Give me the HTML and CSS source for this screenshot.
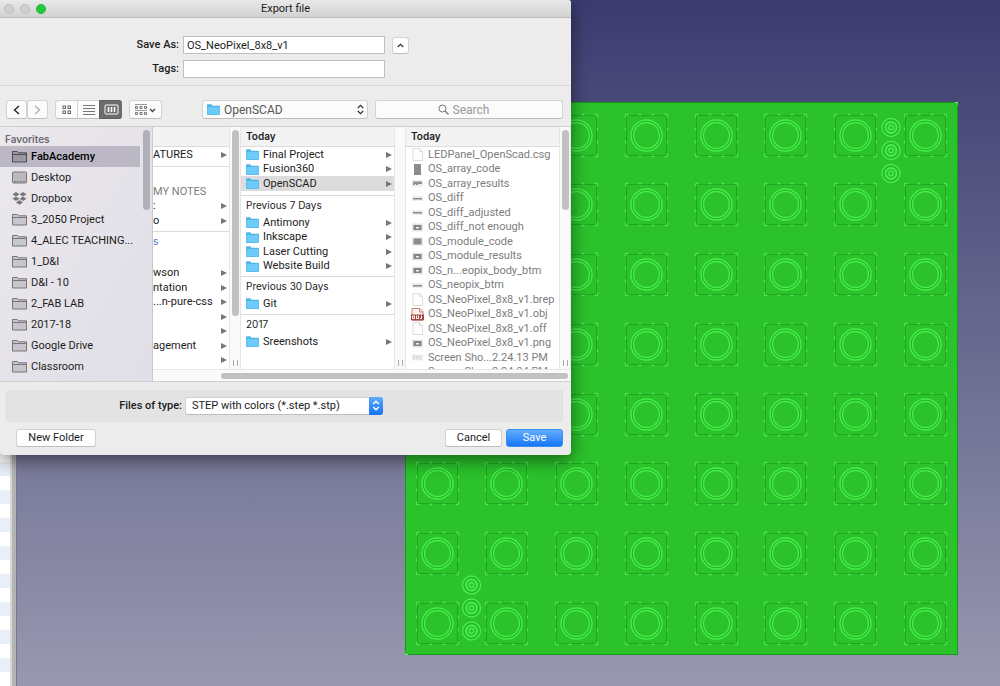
FILE: index.html
```html
<!DOCTYPE html>
<html lang="en">
<head>
    <meta charset="utf-8">
    <title>Export file</title>
    <link rel="stylesheet" href="styles.css">
</head>
<body>
    <!-- Shared icons -->
    <svg class="sprite" aria-hidden="true">
        <defs>
            <symbol id="folder" viewBox="0 0 13 13">
                <path d="M0 2.2q0-1 1-1h3.2l1.3 1.5H12q1 0 1 1V11q0 1-1 1H1q-1 0-1-1z" fill="#4fb4e6"/>
                <path d="M.5 4h12v7.4H.5z" fill="#6ccbf7"/>
            </symbol>
            <symbol id="place" viewBox="0 0 15 13">
                <path d="M.5 12V1.5h4.8l1.2 1.3h8V12z" fill="currentColor" fill-opacity=".28" stroke="currentColor"/>
                <path d="M.5 4.5h14" stroke="currentColor"/>
            </symbol>
            <symbol id="desktop" viewBox="0 0 15 13">
                <rect x=".5" y="1" width="14" height="11" rx="1" fill="currentColor" fill-opacity=".4" stroke="currentColor"/>
                <path d="M2 10.5h11" stroke="currentColor" stroke-dasharray="2 1"/>
            </symbol>
            <symbol id="dropbox" viewBox="0 0 15 13">
                <path d="M4 0l3.500 2.200L4 4.400.5 2.200zM11 0l3.500 2.200L11 4.400 7.500 2.200zM4 4.600l3.500 2.200L4 9 .5 6.800zM11 4.600l3.500 2.200L11 9 7.500 6.800zM7.500 8L11 10.400 7.500 12.800 4 10.400z" fill="currentColor"/>
            </symbol>
            <symbol id="arrow" viewBox="0 0 6 6">
                <path d="M0 0l6 3-6 3z" fill="#777"/>
            </symbol>
            <symbol id="page" viewBox="0 0 13 13">
                <path d="M2 .5h6.500l3 3v9H2z" fill="#fff" stroke="#ddd"/>
                <path d="M8.500.5v3h3" fill="none" stroke="#ddd"/>
            </symbol>
            <symbol id="code" viewBox="0 0 13 13">
                <path d="M3 1h7v11H3z" fill="#8c8c8c"/>
            </symbol>
            <symbol id="results" viewBox="0 0 13 13">
                <path d="M1 3h11v7H1z" fill="#eee"/>
                <path d="M2 4.500h9V7H7v1H5V7H4v1H2z" fill="#909090"/>
            </symbol>
            <symbol id="line" viewBox="0 0 13 13">
                <path d="M1 4h11v5H1z" fill="#eee"/>
                <path d="M2 6h9v1.500H2z" fill="#8a8a8a"/>
            </symbol>
            <symbol id="shot" viewBox="0 0 13 13">
                <path d="M1 2.500h11v8H1z" fill="#e6e6e6"/>
                <path d="M2.500 4h8v5h-8z" fill="#858585"/>
                <path d="M5 6h3v1.500H5z" fill="#eee"/>
            </symbol>
            <symbol id="module" viewBox="0 0 13 13">
                <path d="M1 2.500h11v8H1z" fill="#e6e6e6"/>
                <path d="M2.500 3.500h8v6h-8z" fill="#8c8c8c"/>
            </symbol>
            <symbol id="faint" viewBox="0 0 13 13">
                <path d="M1 3.500h11v6H1z" fill="#ececec"/>
                <path d="M2 5.500h9M2 7.500h9" stroke="#d3d3d3" stroke-dasharray="2 1"/>
            </symbol>
            <symbol id="obj" viewBox="0 0 13 13">
                <path d="M1 .5h8l3 3v9H1z" fill="#fff3f1" stroke="#c98079"/>
                <path d="M8.500.5V4H12" fill="none" stroke="#c98079"/>
                <path d="M0 6.500h13V12H0z" fill="#a8453e"/>
                <path d="M1.500 8h2v2.500h-2zM5.500 7.500v3h2v-3M9 10.500h1.500v-3" fill="none" stroke="#fff"/>
            </symbol>
        </defs>
    </svg>

    <!-- Application window behind the dialog -->
    <div class="viewer">
        <div class="tree-edge"></div>
        <svg class="board" viewBox="0 0 553 553" role="img" aria-label="8x8 LED panel model">
            <defs>
                <g id="led" fill="none">
                    <rect x="-19.500" y="-19.500" width="40" height="40" stroke="#20a722"/>
                    <path d="M-20.500-20.500h42M21.500-20.500v42M21.500 21.500h-42M-20.500 21.500v-42" stroke="#47e84a" stroke-width="1.300" stroke-dasharray="3 10"/>
                    <g transform="translate(.5 .5)">
                        <circle r="15.500" stroke="#45ee48" stroke-width="1.400"/>
                        <circle r="14.200" stroke="#20a722" stroke-width=".8"/>
                        <circle r="13" stroke="#45ee48" stroke-width="1.300"/>
                    </g>
                </g>
                <g id="row">
                    <use href="#led" x="32"/>
                    <use href="#led" x="101"/>
                    <use href="#led" x="171"/>
                    <use href="#led" x="241"/>
                    <use href="#led" x="311"/>
                    <use href="#led" x="380"/>
                    <use href="#led" x="450"/>
                    <use href="#led" x="520"/>
                </g>
                <g id="pin" fill="none" stroke="#4aed4d" stroke-width="1.400">
                    <circle r="9"/>
                    <circle r="7.600" stroke="#20a722" stroke-width=".6"/>
                    <circle r="5.500" stroke-width="1.800"/>
                    <circle r="2.300"/>
                </g>
                <g id="header">
                    <use href="#pin" y="0"/>
                    <use href="#pin" y="23"/>
                    <use href="#pin" y="46"/>
                </g>
            </defs>
            <rect x=".5" y=".5" width="552" height="552" fill="#2bc22c" stroke="#169a1c"/>
            <use href="#row" y="33"/>
            <use href="#row" y="102"/>
            <use href="#row" y="172"/>
            <use href="#row" y="242"/>
            <use href="#row" y="312"/>
            <use href="#row" y="381"/>
            <use href="#row" y="451"/>
            <use href="#row" y="521"/>
            <use href="#header" x="486" y="25.500"/>
            <use href="#header" x="66.500" y="483"/>
            <path d="M550 .5h3v3M0 550v2.500h3" fill="none" stroke="#6df070"/>
        </svg>
    </div>

    <!-- Export dialog -->
    <form class="dialog" onsubmit="return false">
        <header class="titlebar">
            <div class="lights"><i></i><i></i><i class="zoom"></i></div>
            <h1>Export file</h1>
        </header>

        <div class="name-form">
            <label for="save-as">Save As:</label>
            <input id="save-as" type="text" value="OS_NeoPixel_8x8_v1">
            <button type="button" class="collapse" aria-label="Collapse">
                <svg width="7" height="5"><path d="M.7 4l2.800-2.700L6.300 4" fill="none" stroke="#333" stroke-width="1.300"/></svg>
            </button>
            <label for="tags">Tags:</label>
            <input id="tags" type="text">
        </div>

        <div class="toolbar">
            <div class="nav">
                <button type="button" aria-label="Back"><svg width="7" height="10"><path d="M6 1L1.500 5 6 9" fill="none" stroke="#222" stroke-width="1.400"/></svg></button>
                <button type="button" aria-label="Forward"><svg width="7" height="10"><path d="M1 1l4.500 4L1 9" fill="none" stroke="#aaa" stroke-width="1.200"/></svg></button>
            </div>
            <div class="views">
                <button type="button" aria-label="Icons"><svg width="10" height="10" fill="none" stroke="#666"><rect x="1" y="1" width="2.500" height="2.500"/><rect x="6" y="1" width="2.500" height="2.500"/><rect x="1" y="6" width="2.500" height="2.500"/><rect x="6" y="6" width="2.500" height="2.500"/></svg></button>
                <button type="button" aria-label="List"><svg width="12" height="10"><path d="M0 .5h12M0 3.500h12M0 6.500h12M0 9.500h12" stroke="#777"/></svg></button>
                <button type="button" class="active" aria-label="Columns"><svg width="15" height="11" fill="none" stroke="#fff"><rect x="1" y="1" width="13" height="9" rx="1"/><path d="M4.500 3v5M7.500 3v5M10.500 3v5" stroke-width="1.600"/></svg></button>
            </div>
            <button type="button" class="arrange" aria-label="Arrange">
                <svg width="21" height="12" fill="none" stroke="#777"><path d="M0 .5h12M0 6.500h12" stroke="#999"/><path d="M.5 2.500h2v2h-2zM5 2.500h2v2H5zM9.500 2.500h2v2h-2zM.5 8.500h2v2h-2zM5 8.500h2v2H5zM9.500 8.500h2v2h-2z"/><path d="M15 5l2.500 2.500L20 5" stroke="#444" stroke-width="1.300"/></svg>
            </button>
            <div class="location">
                <svg class="icon"><use href="#folder"/></svg>
                <select aria-label="Location"><option>OpenSCAD</option></select>
                <svg class="updown" width="7" height="11"><path d="M.8 4l2.700-2.700L6.200 4M.8 7l2.700 2.700L6.200 7" fill="none" stroke="#333" stroke-width="1.200"/></svg>
            </div>
            <label class="search">
                <svg width="11" height="11" fill="none" stroke="#777"><circle cx="4.500" cy="4.500" r="3.500"/><path d="M7 7l3.500 3.500" stroke-width="1.300"/></svg>
                <input type="search" placeholder="Search" aria-label="Search">
            </label>
        </div>

        <div class="browser">
            <nav class="sidebar">
                <div class="places">
                    <h2>Favorites</h2>
                    <ul>
                        <li class="selected"><svg><use href="#place"/></svg>FabAcademy</li>
                        <li><svg><use href="#desktop"/></svg>Desktop</li>
                        <li><svg><use href="#dropbox"/></svg>Dropbox</li>
                        <li><svg><use href="#place"/></svg>3_2050 Project</li>
                        <li><svg><use href="#place"/></svg>4_ALEC TEACHING...</li>
                        <li><svg><use href="#place"/></svg>1_D&amp;I</li>
                        <li><svg><use href="#place"/></svg>D&amp;I - 10</li>
                        <li><svg><use href="#place"/></svg>2_FAB LAB</li>
                        <li><svg><use href="#place"/></svg>2017-18</li>
                        <li><svg><use href="#place"/></svg>Google Drive</li>
                        <li><svg><use href="#place"/></svg>Classroom</li>
                        <li><svg><use href="#place"/></svg></li>
                    </ul>
                </div>
                <div class="track"><div class="thumb short"></div></div>
            </nav>

            <div class="columns">
                <div class="panes">
                    <section class="pane peek">
                        <h3 class="top"></h3>
                        <ul>
                            <li><span>ATURES</span><svg class="more"><use href="#arrow"/></svg></li>
                        </ul>
                        <h3></h3>
                        <ul>
                            <li class="dim"><span>MY NOTES</span></li>
                            <li><span>:</span><svg class="more"><use href="#arrow"/></svg></li>
                            <li><span>o</span><svg class="more"><use href="#arrow"/></svg></li>
                        </ul>
                        <h3 class="tagged">s</h3>
                        <ul>
                            <li></li>
                            <li><span>wson</span><svg class="more"><use href="#arrow"/></svg></li>
                            <li><span>ntation</span><svg class="more"><use href="#arrow"/></svg></li>
                            <li><span>...n-pure-css</span><svg class="more"><use href="#arrow"/></svg></li>
                            <li><span></span><svg class="more"><use href="#arrow"/></svg></li>
                            <li><span></span><svg class="more"><use href="#arrow"/></svg></li>
                            <li><span>agement</span><svg class="more"><use href="#arrow"/></svg></li>
                            <li><span></span><svg class="more"><use href="#arrow"/></svg></li>
                        </ul>
                    </section>
                    <div class="track"><div class="thumb long"></div><div class="grip"></div></div>

                    <section class="pane">
                        <h3 class="top">Today</h3>
                        <ul>
                            <li><svg class="icon"><use href="#folder"/></svg><span>Final Project</span><svg class="more"><use href="#arrow"/></svg></li>
                            <li><svg class="icon"><use href="#folder"/></svg><span>Fusion360</span><svg class="more"><use href="#arrow"/></svg></li>
                            <li class="selected"><svg class="icon"><use href="#folder"/></svg><span>OpenSCAD</span><svg class="more"><use href="#arrow"/></svg></li>
                        </ul>
                        <h3>Previous 7 Days</h3>
                        <ul>
                            <li><svg class="icon"><use href="#folder"/></svg><span>Antimony</span><svg class="more"><use href="#arrow"/></svg></li>
                            <li><svg class="icon"><use href="#folder"/></svg><span>Inkscape</span><svg class="more"><use href="#arrow"/></svg></li>
                            <li><svg class="icon"><use href="#folder"/></svg><span>Laser Cutting</span><svg class="more"><use href="#arrow"/></svg></li>
                            <li><svg class="icon"><use href="#folder"/></svg><span>Website Build</span><svg class="more"><use href="#arrow"/></svg></li>
                        </ul>
                        <h3>Previous 30 Days</h3>
                        <ul>
                            <li><svg class="icon"><use href="#folder"/></svg><span>Git</span><svg class="more"><use href="#arrow"/></svg></li>
                        </ul>
                        <h3>2017</h3>
                        <ul>
                            <li><svg class="icon"><use href="#folder"/></svg><span>Sreenshots</span><svg class="more"><use href="#arrow"/></svg></li>
                        </ul>
                    </section>
                    <div class="track"><div class="grip"></div></div>

                    <section class="pane files">
                        <h3 class="top">Today</h3>
                        <ul>
                            <li><svg class="icon"><use href="#page"/></svg><span>LEDPanel_OpenScad.csg</span></li>
                            <li><svg class="icon"><use href="#code"/></svg><span>OS_array_code</span></li>
                            <li><svg class="icon"><use href="#results"/></svg><span>OS_array_results</span></li>
                            <li><svg class="icon"><use href="#line"/></svg><span>OS_diff</span></li>
                            <li><svg class="icon"><use href="#line"/></svg><span>OS_diff_adjusted</span></li>
                            <li><svg class="icon"><use href="#shot"/></svg><span>OS_diff_not enough</span></li>
                            <li><svg class="icon"><use href="#module"/></svg><span>OS_module_code</span></li>
                            <li><svg class="icon"><use href="#shot"/></svg><span>OS_module_results</span></li>
                            <li><svg class="icon"><use href="#shot"/></svg><span>OS_n...eopix_body_btm</span></li>
                            <li><svg class="icon"><use href="#line"/></svg><span>OS_neopix_btm</span></li>
                            <li><svg class="icon"><use href="#page"/></svg><span>OS_NeoPixel_8x8_v1.brep</span></li>
                            <li><svg class="icon"><use href="#obj"/></svg><span>OS_NeoPixel_8x8_v1.obj</span></li>
                            <li><svg class="icon"><use href="#page"/></svg><span>OS_NeoPixel_8x8_v1.off</span></li>
                            <li><svg class="icon"><use href="#shot"/></svg><span>OS_NeoPixel_8x8_v1.png</span></li>
                            <li><svg class="icon"><use href="#faint"/></svg><span>Screen Sho...2.24.13 PM</span></li>
                            <li><svg class="icon"><use href="#faint"/></svg><span>Screen Sho...2.24.24 PM</span></li>
                        </ul>
                    </section>
                    <div class="track"><div class="thumb short"></div><div class="grip"></div></div>
                </div>
                <div class="h-track"><div class="h-thumb"></div></div>
            </div>
        </div>

        <div class="type-box">
            <label for="file-type">Files of type:</label>
            <div class="type-select">
                <select id="file-type"><option>STEP with colors (*.step *.stp)</option></select>
                <svg class="cap" width="14" height="17"><path d="M4.200 7L7 4.200 9.800 7M4.200 10L7 12.800 9.800 10" fill="none" stroke="#fff" stroke-width="1.400"/></svg>
            </div>
        </div>

        <footer class="actions">
            <button type="button" class="new-folder">New Folder</button>
            <button type="button">Cancel</button>
            <button type="submit" class="primary">Save</button>
        </footer>
    </form>
</body>
</html>
```

FILE: styles.css
```css
* {
    box-sizing: border-box;
}

body {
    margin: 0;
    font-family: Roboto, "Liberation Sans", sans-serif;
    font-size: 11px;
    line-height: 14px;
    color: #1c1c1c;
}

h1, h2, h3, ul {
    margin: 0;
    padding: 0;
    font-size: 11px;
    font-weight: 400;
    list-style: none;
}

button, input, select {
    margin: 0;
    padding: 0;
    font: inherit;
    color: inherit;
    appearance: none;
    outline: none;
}

svg {
    display: block;
    flex: none;
}

.sprite {
    position: absolute;
    width: 0;
    height: 0;
}

/* 3D view behind the dialog */
.viewer {
    position: relative;
    display: flex;
    height: 100vh;
    overflow: hidden;
    background: linear-gradient(#3b3b70, #9898b0);
}

.tree-edge {
    width: 17px;
    border-right: 1px solid #77778a;
    background:
        linear-gradient(90deg, transparent 10px, #d8d8d8 10px, #d8d8d8 12px, #b4b4b4 12px),
        repeating-linear-gradient(#fff 0, #fff 14px, #e9eff9 14px, #e9eff9 28px);
}

.board {
    position: absolute;
    top: 102px;
    left: 405px;
    width: 553px;
    height: 553px;
}

/* Dialog window */
.dialog {
    position: absolute;
    top: 0;
    left: 0;
    width: 571px;
    background: #ececec;
    border-radius: 0 3px 4px 4px;
    box-shadow: 0 5px 18px rgba(0, 0, 0, 0.5);
    overflow: hidden;
}

.titlebar {
    display: grid;
    grid-template-columns: 1fr auto 1fr;
    align-items: center;
    height: 18px;
    padding: 0 4px;
    background: linear-gradient(#e9e9e9, #d2d2d2);
    border-bottom: 1px solid #bcbcbc;
}

.lights {
    display: flex;
    gap: 6px;
}

.lights i {
    width: 10px;
    height: 10px;
    border: 1px solid #bdbdbd;
    border-radius: 50%;
    background: #d0d0d0;
}

.lights .zoom {
    border-color: #1fb536;
    background: #22cb3e;
}

/* File name and tags */
.name-form {
    display: grid;
    grid-template-columns: 1fr 202px 1fr;
    gap: 6px 0;
    align-items: center;
    padding: 18px 3px 7px 0;
    border-bottom: 1px solid #d6d6d6;
}

.name-form label {
    padding-right: 4px;
    text-align: right;
    font-weight: 500;
}

.name-form input {
    height: 18px;
    padding: 0 3px;
    border: 1px solid #bfbfbf;
    background: #fff;
}

.toolbar button, .actions button, .collapse, .location, .search, .type-select {
    background: #fff;
    border: 1px solid #d2d2d2;
    border-bottom-color: #bdbdbd;
    border-radius: 3px;
}

.toolbar button, .collapse {
    display: flex;
    align-items: center;
    justify-content: center;
}

.collapse {
    width: 17px;
    height: 17px;
    margin-left: 7px;
}

/* Toolbar */
.toolbar {
    display: flex;
    align-items: center;
    gap: 7px;
    padding: 14px 8px 7px 6px;
    border-bottom: 1px solid #cfcfcf;
}

.toolbar button {
    height: 19px;
    background: #fbfbfb;
}

.nav, .views {
    display: flex;
}

.nav button {
    width: 21px;
}

.views button {
    width: 22px;
    border-radius: 0;
    border-right-width: 0;
}

.views button:first-child {
    border-radius: 3px 0 0 3px;
}

.views .active {
    width: 23px;
    background: #6c6c6c;
    border-color: #606060;
    border-radius: 0 3px 3px 0;
}

.toolbar .arrange {
    width: 33px;
    margin-right: 33px;
}

.location {
    display: flex;
    align-items: center;
    gap: 4px;
    width: 166px;
    height: 19px;
    padding: 0 3px 0 4px;
    background: #fbfbfb;
    color: #555;
}

.location select {
    flex: 1;
    border: 0;
    background: none;
}

.location select, .search input {
    font-size: 12px;
}

.search {
    display: flex;
    flex: 1;
    align-items: center;
    justify-content: center;
    gap: 4px;
    height: 19px;
    background: #fbfbfb;
}

.search input {
    width: 48px;
    border: 0;
    background: none;
}

.search input::placeholder {
    color: #999;
    opacity: 1;
}

/* Column browser */
.browser {
    display: flex;
    height: 255px;
    border-bottom: 1px solid #cfcfcf;
}

.sidebar {
    display: flex;
    width: 153px;
    overflow: hidden;
    background: linear-gradient(120deg, #ebe9ed, #e0dee6);
    border-right: 1px solid #c9c9c9;
}

.places {
    flex: 1;
}

.places h2 {
    padding: 5px 5px 0;
    font-family: Inter, "Liberation Sans", sans-serif;
    font-size: 10px;
    font-weight: 600;
    color: #6c6a70;
}

.places li {
    display: flex;
    align-items: center;
    gap: 4px;
    height: 21px;
    padding-left: 12px;
    white-space: nowrap;
}

.places .selected {
    background: #bcb7c4;
    color: #000;
    font-weight: 500;
}

.places svg {
    width: 15px;
    height: 13px;
    color: #77767a;
}

.places .selected svg {
    color: #4c4a50;
}

.sidebar .track {
    background: none;
    border: 0;
}

.columns {
    display: flex;
    flex: 1;
    flex-direction: column;
    min-width: 0;
    background: #fff;
}

.panes {
    display: flex;
    flex: 1;
    min-height: 0;
}

.pane {
    flex: 1;
    min-width: 0;
    overflow: hidden;
}

.pane.peek {
    flex: 0 0 76px;
}

.pane h3 {
    height: 18px;
    padding: 2px 5px;
    font-family: Inter, "Liberation Sans", sans-serif;
    font-size: 10px;
}

.pane .top {
    height: 20px;
    background: #f3f3f3;
    border-bottom: 1px solid #dcdcdc;
    font-weight: 600;
}

.pane ul {
    display: grid;
    grid-template-columns: minmax(0, 1fr);
    grid-auto-rows: 15px 14px;
    padding: 1px 0 3px;
    border-bottom: 1px solid #dcdcdc;
}

.pane .top + ul {
    padding: 0 0 4px;
}

.pane ul:last-child {
    border-bottom: 0;
}

.pane li {
    display: flex;
    align-items: center;
    gap: 4px;
    padding: 0 2px 0 5px;
    white-space: nowrap;
}

.pane li span {
    flex: 1;
}

.pane .selected {
    background: #dcdcdc;
}

.peek h3:not(.top) {
    height: 16px;
    padding-left: 0;
}

.peek h3.tagged:not(.top) {
    height: 18px;
    color: #3a78c8;
}

.peek li {
    padding-left: 0;
}

.peek .dim, .files li {
    color: #7d7d7d;
}

.icon {
    width: 13px;
    height: 13px;
}

.more {
    width: 6px;
    height: 6px;
}

/* Scroll tracks */
.track {
    display: flex;
    flex-direction: column;
    justify-content: space-between;
    align-items: center;
    width: 12px;
    padding: 3px 2px;
    background: #fafafa;
    border: 1px solid #e6e6e6;
    border-width: 0 1px;
}

.thumb {
    width: 7px;
    border-radius: 4px;
    background: #c1c1c1;
}

.sidebar .thumb {
    background: #b2b0b6;
}

.thumb.short {
    height: 80px;
}

.thumb.long {
    height: 186px;
}

.grip {
    width: 5px;
    height: 6px;
    margin-top: auto;
    border: 1px solid #aaa;
    border-width: 0 1px;
}

.h-track {
    padding: 3px 3px 2px 68px;
    border-top: 1px solid #e6e6e6;
    background: #fafafa;
}

.h-thumb {
    height: 6px;
    border-radius: 3px;
    background: #c1c1c1;
}

/* File type */
.type-box {
    display: grid;
    grid-template-columns: 1fr 198px 1fr;
    align-items: center;
    margin: 8px 8px 0 6px;
    padding: 6px 1px 6px 0;
    background: #e3e3e3;
    border: 1px solid #dfdfdf;
    border-radius: 3px;
}

.type-box label {
    padding-right: 3px;
    text-align: right;
    font-weight: 500;
}

.type-select {
    display: flex;
    position: relative;
    height: 18px;
}

.type-select select {
    flex: 1;
    padding-left: 6px;
    border: 0;
    background: none;
}

.cap {
    position: absolute;
    top: -1px;
    right: -1px;
    height: 18px;
    background: linear-gradient(#5fabfa, #1473f5);
    border-radius: 0 3px 3px 0;
    pointer-events: none;
}

/* Bottom buttons */
.actions {
    display: flex;
    gap: 4px;
    padding: 7px 8px 8px 16px;
}

.actions button {
    width: 57px;
    height: 18px;
}

.actions .new-folder {
    width: 80px;
    margin-right: auto;
}

.actions .primary {
    background: linear-gradient(#64affb, #1676f6);
    border-color: #3c8ef0;
    color: #fff;
}
```
